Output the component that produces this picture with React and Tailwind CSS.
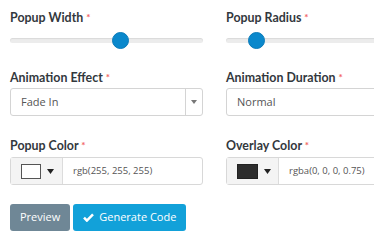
const Label = ({ children }) => (
  <div
    className="text-[12.4px] font-bold text-[#33383d] leading-none h-[13px]"
    style={{ fontFamily: "Lato, 'Open Sans', sans-serif" }}
  >
    {children} <span className="text-[#f26464] text-[10px] align-top">*</span>
  </div>
);

function Slider({ pos }) {
  return (
    <div className="relative h-[17px] mt-[7px]">
      <div className="absolute left-0 right-0 top-[6px] h-[5px] rounded-full bg-[#ececec] shadow-[inset_0_1px_1px_rgba(0,0,0,0.08)]" />
      <div
        className="absolute top-0 w-[17px] h-[17px] rounded-full bg-[#0a88cc] border border-[#0b7bb9]"
        style={{ left: pos }}
      />
    </div>
  );
}

function Select({ value, arrow }) {
  return (
    <div className="mt-[3px] h-[28px] flex border border-[#d4d4d4] rounded-[3px] bg-white">
      <div className="flex-1 flex items-center pl-[10px] text-[11px] text-[#555]">{value}</div>
      {arrow && (
        <div className="w-[17px] border-l border-[#d4d4d4] flex items-center justify-center">
          <svg width="6" height="4" viewBox="0 0 6 4"><path d="M0 0h6L3 4z" fill="#777" /></svg>
        </div>
      )}
    </div>
  );
}

function ColorInput({ swatch, value }) {
  return (
    <div className="mt-[4px] h-[28px] flex border border-[#d8d8d8] rounded-[3px] bg-white">
      <div className="w-[52px] shrink-0 bg-[#f4f4f4] border-r border-[#dcdcdc] flex items-center pl-[10px] gap-[6px]">
        {swatch === "white" ? (
          <div className="w-[20px] h-[15px] bg-white border border-[#555]" />
        ) : (
          <div className="w-[21px] h-[15px] bg-[#2d2d2d] border border-[#222]" />
        )}
        <svg width="7" height="5" viewBox="0 0 7 5"><path d="M0 0h7L3.5 5z" fill="#222" /></svg>
      </div>
      <div className="flex items-center pl-[10px] text-[9.5px] text-[#555]">{value}</div>
    </div>
  );
}

export default function App() {
  return (
    <div
      className="w-[374px] h-[249px] overflow-hidden bg-white pl-[10px] pt-[12px]"
      style={{ fontFamily: "'Open Sans', sans-serif" }}
    >
      <div className="grid grid-cols-[193px_193px] gap-x-[23px]">
        <div>
          <Label>Popup Width</Label>
          <Slider pos={102} />
        </div>
        <div>
          <Label>Popup Radius</Label>
          <Slider pos={22} />
        </div>
      </div>
      <div className="grid grid-cols-[193px_193px] gap-x-[23px] mt-[23px]">
        <div>
          <Label>Animation Effect</Label>
          <Select value="Fade In" arrow />
        </div>
        <div>
          <Label>Animation Duration</Label>
          <Select value="Normal" />
        </div>
      </div>
      <div className="grid grid-cols-[193px_193px] gap-x-[23px] mt-[24px]">
        <div>
          <Label>Popup Color</Label>
          <ColorInput swatch="white" value="rgb(255, 255, 255)" />
        </div>
        <div>
          <Label>Overlay Color</Label>
          <ColorInput swatch="black" value="rgba(0, 0, 0, 0.75)" />
        </div>
      </div>
      <div className="flex gap-[3px] mt-[19px]">
        <button className="h-[27px] px-[10px] rounded-[3px] bg-[#6f8796] text-white text-[11px]">Preview</button>
        <button className="h-[27px] px-[10px] rounded-[3px] bg-[#12a1d9] text-white text-[11px] flex items-center gap-[5px]">
          <svg width="11" height="9" viewBox="0 0 12 10"><path d="M1 5.2l3.2 3.2L11 1.6" stroke="#fff" strokeWidth="2.8" fill="none" /></svg>
          Generate Code
        </button>
      </div>
    </div>
  );
}
